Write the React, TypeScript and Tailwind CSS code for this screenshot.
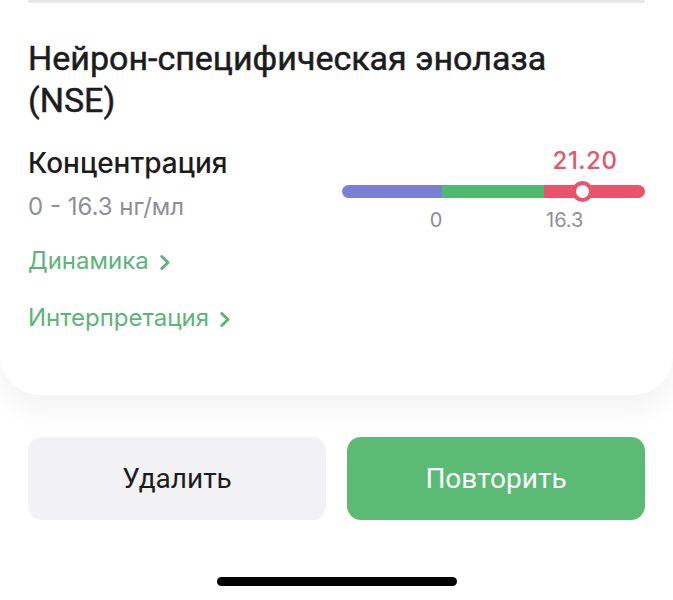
import React from "react";

function Chevron() {
  return (
    <svg width="12" height="17" viewBox="0 0 12 17" className="ml-[10px] mt-[2px]" fill="none">
      <polyline points="2.8,2.5 9,8.5 2.8,14.5" stroke="#5bb578" strokeWidth="3" strokeLinecap="round" strokeLinejoin="round" />
    </svg>
  );
}

const sf = { fontFamily: "Inter, 'Noto Sans', sans-serif" };
const rb = { fontFamily: "Roboto, 'Noto Sans', sans-serif" };

function Slider() {
  return (
    <div className="relative w-[303px] h-[90px]">
      <div className="absolute left-[243px] top-[1px] -translate-x-1/2 text-[24px] leading-[28px] font-medium text-[#e5566b] tracking-[0.5px]" style={sf}>
        21.20
      </div>
      <div className="absolute left-0 right-0 top-[39px] h-[13px] flex rounded-full overflow-hidden">
        <div className="w-[100px] bg-[#7b7fd3]" />
        <div className="w-[102px] bg-[#4fba6f]" />
        <div className="flex-1 bg-[#e9546b]" />
      </div>
      <div className="absolute left-[230px] top-[35px] w-[21px] h-[21px] rounded-full bg-white border-[4px] border-[#e9546b]" />
      <div className="absolute left-[94px] top-[62px] -translate-x-1/2 text-[20px] leading-[24px] text-[#8e8e93]" style={sf}>0</div>
      <div className="absolute left-[204px] top-[62px] text-[20px] leading-[24px] text-[#8e8e93]" style={sf}>16.3</div>
    </div>
  );
}

export default function App() {
  return (
    <div className="w-[673px] h-[600px] bg-white flex flex-col overflow-hidden">
      <div className="bg-white rounded-b-[40px] shadow-[0_14px_28px_rgba(0,0,0,0.05)] px-[28px] pb-[62px]">
        <div className="h-[3px] bg-[#e6e6e6] rounded-full" />
        <h1 className="mt-[34px] text-[34px] leading-[42px] font-normal [-webkit-text-stroke:0.5px_#1c1c1e] text-[#1c1c1e]" style={rb}>
          Нейрон-специфическая энолаза<br />(NSE)
        </h1>
        <div className="flex justify-between mt-[25px]">
          <div className="flex flex-col">
            <div className="text-[28px] leading-[34px] font-medium text-[#1c1c1e]" style={sf}>Концентрация</div>
            <div className="mt-[12px] text-[24px] leading-[30px] text-[#8e8e93]" style={sf}>0 - 16.3 нг/мл</div>
            <div className="mt-[24px] flex items-center text-[24px] leading-[30px] text-[#5bb578]" style={sf}>
              Динамика<Chevron />
            </div>
            <div className="mt-[27px] flex items-center text-[24px] leading-[30px] text-[#5bb578]" style={sf}>
              Интерпретация<Chevron />
            </div>
          </div>
          <Slider />
        </div>
      </div>
      <div className="flex gap-[21px] px-[28px] mt-[42px]">
        <div className="flex-1 h-[83px] rounded-[14px] bg-[#f2f2f4] flex items-center justify-center text-[28px] text-[#1c1c1e]" style={rb}>
          Удалить
        </div>
        <div className="flex-1 h-[83px] rounded-[14px] bg-[#5bba74] flex items-center justify-center text-[28px] text-white" style={rb}>
          Повторить
        </div>
      </div>
      <div className="mt-[57px] flex justify-center">
        <div className="w-[240px] h-[9px] rounded-full bg-black" />
      </div>
    </div>
  );
}
